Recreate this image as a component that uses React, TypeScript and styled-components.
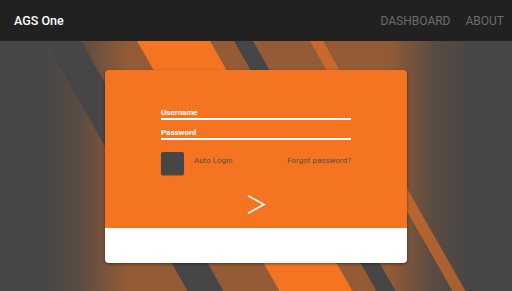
import React from "react";
import styled, { createGlobalStyle } from "styled-components";

const GlobalStyle = createGlobalStyle`
  html, body { margin: 0; padding: 0; background: #464646; }
  body { font-family: Roboto, "Liberation Sans", Arial, sans-serif; }
  * { box-sizing: border-box; }
`;

const Page = styled.div`
  height: 100vh;
  display: flex;
  flex-direction: column;
  overflow: hidden;
`;

const Header = styled.header`
  height: 41px;
  flex: 0 0 41px;
  background: #212121;
  display: flex;
  align-items: center;
  justify-content: space-between;
  padding: 0 8px 0 14px;
  position: relative;
  z-index: 2;
`;

const Title = styled.div`
  color: #ffffff;
  font-size: 12.5px;
  font-weight: 500;
`;

const Nav = styled.nav`
  display: flex;
  gap: 15px;
`;

const NavLink = styled.span`
  color: #6c6c6c;
  font-size: 12px;
  font-weight: 400;
  text-transform: uppercase;
`;

const Main = styled.main`
  flex: 1;
  position: relative;
  display: flex;
  align-items: center;
  justify-content: center;
  overflow: hidden;
`;

const Backdrop = styled.svg`
  position: absolute;
  inset: 0;
  width: 100%;
  height: 100%;
  z-index: 0;
`;

const Card = styled.section`
  position: relative;
  z-index: 1;
  width: 302px;
  border-radius: 4px;
  overflow: hidden;
  box-shadow: 0 1px 3px rgba(0, 0, 0, 0.45);
  display: flex;
  flex-direction: column;
`;

const OrangePanel = styled.div`
  height: 158px;
  background: #f47422;
  padding-top: 38px;
  display: flex;
  flex-direction: column;
  align-items: center;
`;

const WhitePanel = styled.div`
  height: 35px;
  background: #ffffff;
`;

const Form = styled.div`
  width: 190px;
  display: flex;
  flex-direction: column;
`;

const Field = styled.div<{ $gap?: number }>`
  margin-top: ${(p) => p.$gap ?? 0}px;
  border-bottom: 2px solid #ffffff;
  color: #ffffff;
  font-size: 8px;
  line-height: 10px;
  font-weight: 700;
`;

const CheckRow = styled.div`
  margin-top: 12px;
  display: flex;
  align-items: flex-start;
`;

const CheckBox = styled.div`
  width: 23px;
  height: 23px;
  border-radius: 2px;
  background: #464646;
  box-shadow: 0 1px 1px rgba(0, 0, 0, 0.25);
`;

const SmallText = styled.span<{ $grow?: boolean }>`
  color: #5a5046;
  font-size: 8px;
  line-height: 10px;
  padding-top: 4px;
  margin-left: ${(p) => (p.$grow ? "10px" : "0")};
  flex: ${(p) => (p.$grow ? 1 : "none")};
`;

const SubmitButton = styled.button`
  margin-top: 20px;
  background: none;
  border: none;
  padding: 0;
  width: 19px;
  height: 19px;
  display: block;
  cursor: pointer;
`;

const S = 0.57;
const stripe = (x1: number, x2: number) =>
  `${x1},0 ${x2},0 ${x2 + S * 250},250 ${x1 + S * 250},250`;

export default function App() {
  return (
    <Page>
      <GlobalStyle />
      <Header>
        <Title>AGS One</Title>
        <Nav>
          <NavLink>Dashboard</NavLink>
          <NavLink>About</NavLink>
        </Nav>
      </Header>
      <Main>
        <Backdrop viewBox="0 0 512 250" preserveAspectRatio="none">
          <defs>
            <linearGradient id="tint" x1="0" y1="0" x2="512" y2="0" gradientUnits="userSpaceOnUse">
              <stop offset={40 / 512} stopColor="#f47422" stopOpacity="0" />
              <stop offset={80 / 512} stopColor="#f47422" stopOpacity="0.12" />
              <stop offset={128 / 512} stopColor="#f47422" stopOpacity="0.45" />
              <stop offset={388 / 512} stopColor="#f47422" stopOpacity="0.45" />
              <stop offset={432 / 512} stopColor="#f47422" stopOpacity="0.12" />
              <stop offset={472 / 512} stopColor="#f47422" stopOpacity="0" />
            </linearGradient>
          </defs>
          <rect x="0" y="0" width="512" height="250" fill="#464646" />
          <rect x="0" y="0" width="512" height="250" fill="url(#tint)" />
          <polygon points={stripe(45, 81)} fill="#464646" />
          <polygon points={stripe(234, 253)} fill="#464646" />
          <polygon points={stripe(137, 210)} fill="#f47422" />
          <polygon points={stripe(310, 323)} fill="#f47422" fillOpacity="0.55" />
        </Backdrop>
        <Card>
          <OrangePanel>
            <Form>
              <Field>Username</Field>
              <Field $gap={8}>Password</Field>
              <CheckRow>
                <CheckBox />
                <SmallText $grow>Auto Login</SmallText>
                <SmallText>Forgot password?</SmallText>
              </CheckRow>
            </Form>
            <SubmitButton aria-label="Login">
              <svg width="19" height="19" viewBox="0 0 19 19">
                <polyline
                  points="1.5,1 17,9.5 1.5,18"
                  fill="none"
                  stroke="#ffffff"
                  strokeWidth="1.6"
                  strokeLinecap="round"
                  strokeLinejoin="miter"
                />
              </svg>
            </SubmitButton>
          </OrangePanel>
          <WhitePanel />
        </Card>
      </Main>
    </Page>
  );
}
